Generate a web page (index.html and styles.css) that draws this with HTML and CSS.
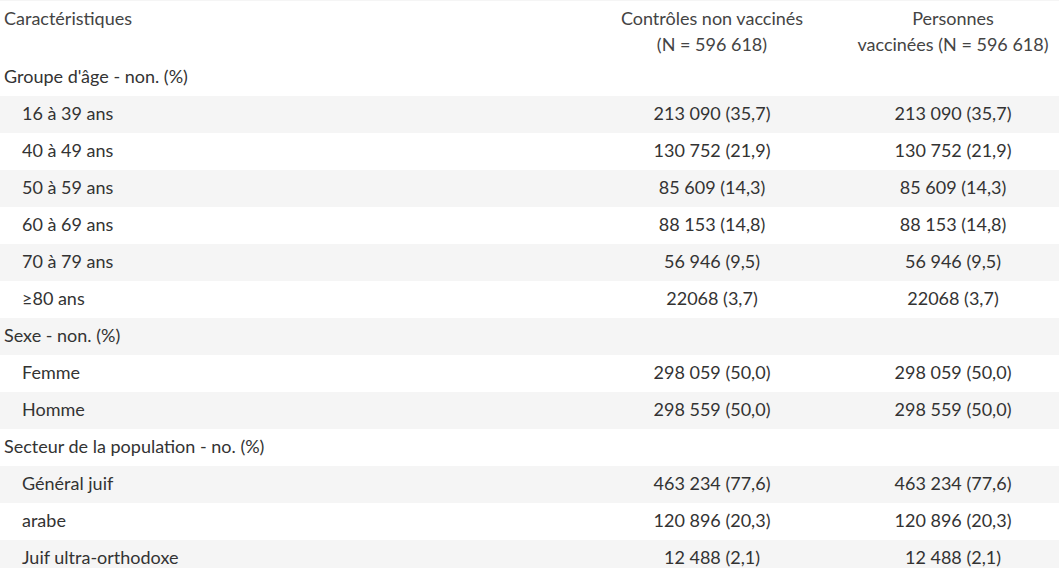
FILE: index.html
```html
<!DOCTYPE html>
<html lang="fr">
<head>
<meta charset="utf-8">
<link rel="stylesheet" href="styles.css">
</head>
<body>
<div class="strip"></div>
<table class="tbl">
  <colgroup>
    <col class="c1"><col class="c2"><col class="c3">
  </colgroup>
  <thead>
    <tr>
      <th class="label">Caractéristiques</th>
      <th>Contrôles non vaccinés<br>(N = 596 618)</th>
      <th>Personnes<br>vaccinées (N = 596 618)</th>
    </tr>
  </thead>
  <tbody>
    <tr class="grp"><td class="label">Groupe d'âge - non. (%)</td><td></td><td></td></tr>
    <tr class="alt"><td class="sub">16 à 39 ans</td><td>213 090 (35,7)</td><td>213 090 (35,7)</td></tr>
    <tr><td class="sub">40 à 49 ans</td><td>130 752 (21,9)</td><td>130 752 (21,9)</td></tr>
    <tr class="alt"><td class="sub">50 à 59 ans</td><td>85 609 (14,3)</td><td>85 609 (14,3)</td></tr>
    <tr><td class="sub">60 à 69 ans</td><td>88 153 (14,8)</td><td>88 153 (14,8)</td></tr>
    <tr class="alt"><td class="sub">70 à 79 ans</td><td>56 946 (9,5)</td><td>56 946 (9,5)</td></tr>
    <tr><td class="sub">≥80 ans</td><td>22068 (3,7)</td><td>22068 (3,7)</td></tr>
    <tr class="alt"><td class="label">Sexe - non. (%)</td><td></td><td></td></tr>
    <tr><td class="sub">Femme</td><td>298 059 (50,0)</td><td>298 059 (50,0)</td></tr>
    <tr class="alt"><td class="sub">Homme</td><td>298 559 (50,0)</td><td>298 559 (50,0)</td></tr>
    <tr><td class="label">Secteur de la population - no. (%)</td><td></td><td></td></tr>
    <tr class="alt"><td class="sub">Général juif</td><td>463 234 (77,6)</td><td>463 234 (77,6)</td></tr>
    <tr><td class="sub">arabe</td><td>120 896 (20,3)</td><td>120 896 (20,3)</td></tr>
    <tr class="alt"><td class="sub">Juif ultra-orthodoxe</td><td>12 488 (2,1)</td><td>12 488 (2,1)</td></tr>
  </tbody>
</table>
</body>
</html>
```
FILE: styles.css
```css
html, body {
  margin: 0;
  padding: 0;
  background: #ffffff;
}
body {
  font-family: Lato, "Open Sans", sans-serif;
  font-size: 18px;
  color: #333333;
}
.strip {
  height: 1px;
  background: #f5f5f5;
}
.tbl {
  width: 1059px;
  border-collapse: collapse;
  table-layout: fixed;
}
.c1 { width: 577px; }
.c2 { width: 270px; }
.c3 { width: 212px; }
.tbl th {
  font-weight: normal;
  color: #444444;
  text-align: center;
  vertical-align: top;
  padding: 4px 4px 2px;
  line-height: 26px;
}
.tbl td {
  height: 37px;
  padding: 0 4px 3px;
  line-height: 26px;
  text-align: center;
  vertical-align: middle;
  box-sizing: border-box;
}
.tbl th.label, .tbl td.label {
  text-align: left;
}
.tbl td.sub {
  text-align: left;
  padding-left: 22px;
}
.tbl tr.alt td {
  background: #f5f5f5;
}
```
